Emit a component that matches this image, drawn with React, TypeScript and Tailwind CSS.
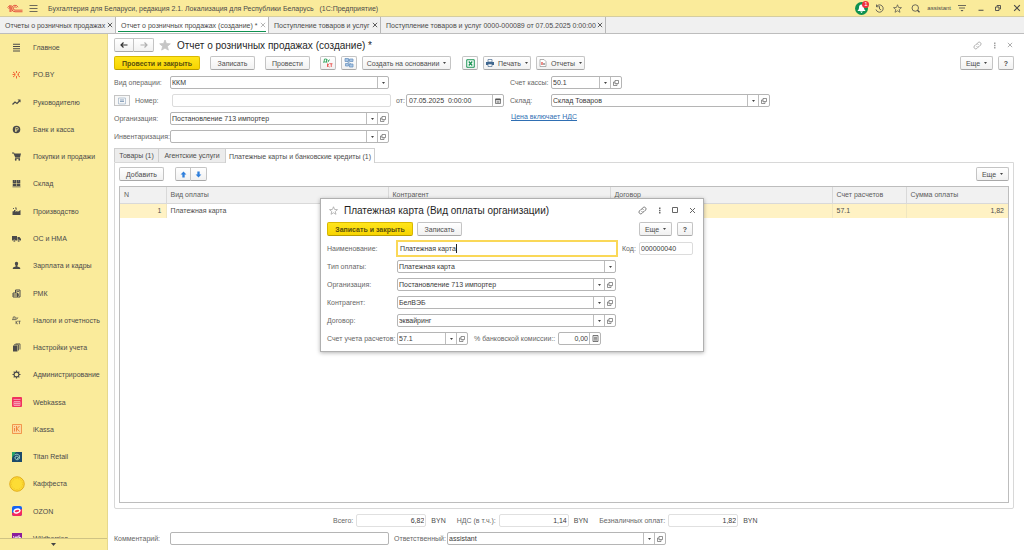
import type { ReactNode } from "react";
import clsx from "clsx";

/* ---------- icons ---------- */

const Svg = ({ children, className = "size-[9px]", box = "0 0 18 18" }: { children: ReactNode; className?: string; box?: string }) => (
  <svg viewBox={box} className={clsx("shrink-0", className)} fill="none" stroke="currentColor" strokeWidth="2" aria-hidden="true">
    {children}
  </svg>
);

const Caret = ({ className = "h-[2px] w-[3px]" }: { className?: string }) => (
  <svg viewBox="0 0 4 2" preserveAspectRatio="none" className={clsx("shrink-0 fill-[#444]", className)} aria-hidden="true">
    <path d="M0 0h4L2 2z" />
  </svg>
);

const OpenIcon = () => (
  <Svg className="size-[6px] text-[#666]" box="0 0 12 12">
    <path d="M4 1h7v6H6L4 8z M4 4H1v7h7V8" strokeWidth="1.4" />
  </Svg>
);

const LinkIcon = () => (
  <Svg>
    <path d="M7 11a3.500 3.500 0 0 0 5 .3l3.400-3.400a3.600 3.600 0 0 0-5-5L8.600 4.600M11 7a3.500 3.500 0 0 0-5-.3l-3.400 3.400a3.600 3.600 0 0 0 5 5l1.800-1.800" strokeWidth="1.700" />
  </Svg>
);

const DotsIcon = () => (
  <Svg className="h-[7px] w-[3px]" box="0 0 6 14">
    <path d="M2 1h3v3H2zM2 5.500h3v3H2zM2 10h3v3H2z" fill="currentColor" stroke="none" />
  </Svg>
);

const CrossIcon = ({ className = "size-[7px]" }: { className?: string }) => (
  <Svg className={className} box="0 0 14 14">
    <path d="M2 2l10 10M12 2L2 12" />
  </Svg>
);

const StarIcon = ({ className, filled }: { className?: string; filled?: boolean }) => (
  <Svg className={className} box="0 0 24 24">
    <path d="M12 2l2.900 7.200 7.700.5-5.900 5 1.900 7.500L12 18l-6.600 4.200 1.900-7.500-5.900-5 7.700-.5z" strokeWidth="1.800" fill={filled ? "currentColor" : "none"} />
  </Svg>
);

const ArrowIcon = ({ back, className }: { back?: boolean; className?: string }) => (
  <Svg className={clsx("h-[6px] w-[8px]", className)} box="0 0 16 12">
    <path d={back ? "M15 6H2M7 1L2 6l5 5" : "M1 6h13M9 1l5 5-5 5"} strokeWidth="2.400" />
  </Svg>
);

const Dk = ({ color }: { color?: boolean }) => (
  <Svg className={color ? "size-[10px]" : "size-[9px]"} box="0 0 20 20">
    <g strokeWidth="1.600">
      <g stroke={color ? "#1d9a4b" : "#4a4a4a"}>
        <path d="M2 8l1-6h4v6M1 9V8h7v1M9 3l2 3M13 3l-3 5" />
      </g>
      <g stroke={color ? "#e8413c" : "#4a4a4a"}>
        <path d="M9 11v7M13 11l-4 3.500 4 3.500M14 11.500h5M16.500 11.500V18" />
      </g>
    </g>
  </Svg>
);

const menuIcons: Record<string, ReactNode> = {
  main: <Svg><path d="M2 2.500h14M2 7h14M2 11.500h14M2 16h14" /></Svg>,
  po: (
    <Svg className="size-[9px] text-[#f0592b]">
      <path d="M9 2v4M9 12v5M2 4l5 4M2 14l5-4M16 4l-5 4M16 14l-5-4M1 9h5M12 9h2" strokeWidth="1.800" />
    </Svg>
  ),
  chart: <Svg><path d="M1 13l5-5 4 3 6-6" strokeWidth="2.600" /><path d="M11 3h6v6z" fill="currentColor" stroke="none" /></Svg>,
  bank: (
    <Svg>
      <circle cx="9" cy="9" r="7.500" fill="currentColor" stroke="none" />
      <path d="M7.500 14V5H10a2.300 2.300 0 0 1 0 5H6M6 12h4" stroke="#faeb9b" strokeWidth="1.500" />
    </Svg>
  ),
  cart: (
    <Svg>
      <path d="M0 1h4l1 2h13l-2 8H6.500L3 3H0z" fill="currentColor" stroke="none" />
      <path d="M6 12.500h10" />
      <circle cx="7.500" cy="15.500" r="1.800" fill="currentColor" stroke="none" />
      <circle cx="14.500" cy="15.500" r="1.800" fill="currentColor" stroke="none" />
    </Svg>
  ),
  stock: (
    <Svg>
      <path d="M1.500 2h7v6h-7zM9.500 2h7v6h-7zM1.500 9h7v5h-7zM9.500 9h7v5h-7zM1 15h16v1.500H1z" fill="currentColor" stroke="none" />
      <path d="M4 4h2M12 4h2" stroke="#faeb9b" strokeWidth="1" />
    </Svg>
  ),
  factory: (
    <Svg>
      <path d="M1 16V9l2-1 1 1V6h3v4l4-3v3l6-4v10z" fill="currentColor" stroke="none" />
      <path d="M2 3h2M6 2h3M7 4h3" strokeWidth="1.800" />
    </Svg>
  ),
  truck: (
    <Svg>
      <path d="M0 4h10v9H0zM11 6h4l3 4v3h-7z" fill="currentColor" stroke="none" />
      <circle cx="4.500" cy="14" r="2.200" fill="currentColor" stroke="#faeb9b" strokeWidth="1" />
      <circle cx="13.500" cy="14" r="2.200" fill="currentColor" stroke="#faeb9b" strokeWidth="1" />
    </Svg>
  ),
  person: (
    <Svg>
      <path d="M9 1.500a3.300 3.300 0 0 1 3.300 3.500c0 2-.8 3.500-1.600 4.400V11l4.300 1.500c1 .4 1.500 1.500 1.500 3.500h-15c0-2 .5-3.100 1.500-3.500L7.300 11V9.400C6.500 8.500 5.700 7 5.700 5A3.300 3.300 0 0 1 9 1.500z" fill="currentColor" stroke="none" />
    </Svg>
  ),
  rmk: (
    <Svg>
      <path d="M7 8V2h9v14H2V8h9v8M2 12h9" />
      <path d="M9 5h5M13 9v5" strokeWidth="1.600" />
    </Svg>
  ),
  tax: <Dk />,
  books: (
    <Svg>
      <path d="M2 5h9v12H2z" fill="currentColor" stroke="none" />
      <path d="M4 3.500h9V15M7 1.800h9V13" strokeWidth="1.700" />
    </Svg>
  ),
  gear: (
    <Svg>
      <circle cx="9" cy="9" r="4.800" strokeWidth="2.200" />
      <path d="M9 1v3M9 14v3M1 9h3M14 9h3M3.400 3.400l2 2M12.600 12.600l2 2M14.600 3.400l-2 2M5.400 12.600l-2 2" strokeWidth="2.400" />
    </Svg>
  ),
  webkassa: (
    <Svg className="size-[10px]" box="0 0 20 20">
      <rect width="20" height="20" rx="2" fill="#f0325e" stroke="none" />
      <path d="M3 5h14M4 9h12v8H4zM4 13h12M8 9v8M12 9v8" stroke="#fbc4d0" strokeWidth="1.300" />
    </Svg>
  ),
  ikassa: (
    <Svg className="size-[10px] text-[#ef7d31]" box="0 0 20 20">
      <path d="M1 1h18v18H1z" strokeWidth="1.500" fill="#fbd9a0" />
      <path d="M5 8v7M5 4.500v1.500M9 4v11M15 4l-5 5.500 5 5.500" strokeWidth="1.800" />
    </Svg>
  ),
  titan: (
    <Svg className="size-[10px]" box="0 0 20 20">
      <path d="M0 0h20v20H0z" fill="#1c4a6b" stroke="none" />
      <path d="M0 0h8L0 12z" fill="#27a567" stroke="none" />
      <path d="M5 6l5-2 5 3v6l-5 3-4-3v-3l4-2 3 2-1 3h-2" stroke="#a9dccb" strokeWidth="1.700" />
    </Svg>
  ),
  kaff: (
    <Svg className="size-[16px]" box="0 0 32 32">
      <circle cx="16" cy="16" r="14.500" fill="#fddc35" stroke="#e2ac1c" />
      <circle cx="16" cy="16" r="11" stroke="#edbb1f" strokeWidth="1.300" strokeDasharray="2 1.500" />
    </Svg>
  ),
  ozon: (
    <Svg className="size-[10px]" box="0 0 20 20">
      <rect width="20" height="20" rx="4" fill="#1463f3" stroke="none" />
      <path d="M0 14l20-8v10a4 4 0 0 1-4 4H4a4 4 0 0 1-4-4z" fill="#f5285f" stroke="none" />
      <ellipse cx="10" cy="10" rx="6" ry="3.600" fill="#f5285f" stroke="#fff" strokeWidth="2.800" transform="rotate(-15 10 10)" />
    </Svg>
  ),
  wb: (
    <Svg className="size-[10px]" box="0 0 20 20">
      <path d="M0 0h20v20H0z" fill="#8a1c9c" stroke="none" />
      <path d="M3 6l2.500 8L8 7l2.500 7L12 6M14 4v10h3.500V9H14" stroke="#fff" strokeWidth="1.700" />
    </Svg>
  ),
};

const menu = [
  ["main", "Главное"],
  ["po", "PO.BY"],
  ["chart", "Руководителю"],
  ["bank", "Банк и касса"],
  ["cart", "Покупки и продажи"],
  ["stock", "Склад"],
  ["factory", "Производство"],
  ["truck", "ОС и НМА"],
  ["person", "Зарплата и кадры"],
  ["rmk", "РМК"],
  ["tax", "Налоги и отчетность"],
  ["books", "Настройки учета"],
  ["gear", "Администрирование"],
  ["webkassa", "Webkassa"],
  ["ikassa", "iKassa"],
  ["titan", "Titan Retail"],
  ["kaff", "Каффеста"],
  ["ozon", "OZON"],
  ["wb", "Wildberries"],
];

/* ---------- controls ---------- */

const Btn = ({ children, className, label }: { children: ReactNode; className?: string; label?: string }) => (
  <button
    type="button"
    aria-label={label}
    className={clsx(
      "flex h-[14px] shrink-0 items-center justify-center gap-1 whitespace-nowrap rounded-[2px] border border-[#c4c4c4] border-b-[#a8a8a8] bg-linear-to-b from-white to-[#f1f1f1] text-[#4d4d4d]",
      className,
    )}
  >
    {children}
  </button>
);

const PrimaryBtn = ({ children }: { children: ReactNode }) => (
  <button
    type="button"
    className="flex h-[14px] w-[86px] shrink-0 items-center justify-center whitespace-nowrap rounded-[2px] border border-[#d9b800] border-b-[#b89c00] bg-linear-to-b from-[#ffe51a] to-[#f7d400] font-bold text-[#5a500c]"
  >
    {children}
  </button>
);

const MoreBtn = () => (
  <Btn className="w-[33px]">
    Еще <Caret />
  </Btn>
);

const SideBtn = ({ children, label }: { children: ReactNode; label: string }) => (
  <button type="button" aria-label={label} className="flex h-full w-[11px] shrink-0 items-center justify-center border-l border-[#bdbdbd]">
    {children}
  </button>
);

const box = "flex h-[13px] items-stretch overflow-hidden rounded-[2px] border border-[#b5b5b5] bg-white text-[#3a3a3a]";

/* select with the small arrow cell, and optionally an "open" button */
const Combo = ({ id, value, open, className }: { id: string; value: string; open?: boolean; className?: string }) => (
  <div className={clsx(box, className)}>
    <div className="relative flex min-w-0 flex-1">
      <select id={id} className="w-full appearance-none bg-transparent pl-px pr-3 outline-none" defaultValue={value}>
        <option>{value}</option>
      </select>
      <span className="pointer-events-none absolute inset-y-0 right-0 flex w-[11px] items-center justify-center border-l border-[#bdbdbd]">
        <Caret />
      </span>
    </div>
    {open && (
      <SideBtn label="Открыть">
        <OpenIcon />
      </SideBtn>
    )}
  </div>
);

const Row = ({ children }: { children: ReactNode }) => <div className="flex h-[13px] items-center">{children}</div>;

const Label = ({ id, children, className }: { id: string; children: ReactNode; className?: string }) => (
  <label htmlFor={id} className={clsx("shrink-0 whitespace-nowrap text-[#666]", className)}>
    {children}
  </label>
);

const Total = ({ id, label, value }: { id: string; label: string; value: string }) => (
  <div className="flex items-center">
    <Label id={id} className="mr-[3px]">{label}</Label>
    <input id={id} readOnly defaultValue={value} className="h-[13px] w-[70px] rounded-[2px] border border-[#e0e0e0] bg-white px-px text-right text-[#3a3a3a]" />
    <span className="ml-[5px] text-[#4d4d4d]">BYN</span>
  </div>
);

/* ---------- page parts ---------- */

const TitleBar = () => (
  <header className="flex h-[17px] shrink-0 items-center border-b border-[#d5cda0] bg-[#faeb9b] text-[#4a4a4a]">
    <svg viewBox="0 0 32 18" className="ml-[7px] h-[9px] w-4 shrink-0" fill="none" stroke="#e0382f" strokeWidth="1.700" aria-hidden="true">
      <path d="M1 7l5-4v13M3 9l3-2M8 2v14M22 6.500A6.500 6.500 0 1 0 16 15.500H31M19 7.600A3.300 3.300 0 1 0 16 12.300H31" />
    </svg>
    <button type="button" aria-label="Меню" className="ml-[6px]">
      <Svg className="block size-[9px]"><path d="M1 3h16M1 9h16M1 15h16" strokeWidth="1.600" /></Svg>
    </button>
    <p className="ml-[10px] whitespace-nowrap">
      Бухгалтерия для Беларуси, редакция 2.1. Локализация для Республики Беларусь &nbsp; (1С:Предприятие)
    </p>
    <div className="ml-auto flex items-center pr-[3px]">
      <button type="button" aria-label="Уведомления" className="relative">
        <Svg className="block size-[13px]" box="0 0 26 26">
          <circle cx="13" cy="13" r="13" fill="#0f9150" stroke="none" />
          <path d="M13 5c-4 0-5 3-5 6.500C8 15 6 16 5 18h16c-1-2-3-3-3-6.500C18 8 17 5 13 5zM10 19h6l-3 3z" fill="#fff" stroke="none" />
        </Svg>
        <span className="absolute -right-px -top-px flex size-[7px] items-center justify-center rounded-full bg-[#f0303c] text-[6px] leading-none text-white">1</span>
      </button>
      <button type="button" aria-label="История" className="ml-[7px]">
        <Svg className="block size-[9px]"><path d="M3 5a7.300 7.300 0 1 1-1 6M3 1v4.500h4.500M9 4.500V10l3.500 2" strokeWidth="1.600" /></Svg>
      </button>
      <button type="button" aria-label="Избранное" className="ml-[9px]">
        <StarIcon className="block size-[9px]" />
      </button>
      <button type="button" aria-label="Поиск" className="ml-[9px]">
        <Svg className="block size-[9px]"><circle cx="8.500" cy="8" r="6.500" strokeWidth="1.600" /><path d="M13 12.500l4 4" strokeWidth="2.500" /></Svg>
      </button>
      <span className="ml-[7px] text-[6px]">assistant</span>
      <button type="button" aria-label="Настройки" className="ml-[7px]">
        <Svg className="block size-[8px]" box="0 0 16 16"><path d="M0 3h16M2 8h12" strokeWidth="1.600" /><path d="M5 12h6l-3 3z" fill="currentColor" stroke="none" /></Svg>
      </button>
      <button type="button" aria-label="Свернуть" className="ml-[12px]">
        <Svg className="block size-[6px]" box="0 0 12 12"><path d="M1 10.500h10" /></Svg>
      </button>
      <button type="button" aria-label="Восстановить" className="ml-[11px]">
        <Svg className="block size-[6px]" box="0 0 12 12"><path d="M1 4h7v7H1zM4 3V1h7v7H9" strokeWidth="1.800" /></Svg>
      </button>
      <button type="button" aria-label="Закрыть программу" className="ml-[12px]">
        <CrossIcon className="block size-[8px]" />
      </button>
    </div>
  </header>
);

const windows = [
  ["Отчеты о розничных продажах", "w-[116px]"],
  ["Отчет о розничных продажах (создание) *", "w-[153px]"],
  ["Поступление товаров и услуг", "w-[112px]"],
  ["Поступление товаров и услуг 0000-000089 от 07.05.2025 0:00:00", "w-[225px]"],
];

const WindowTabs = () => (
  <nav className="flex h-[17px] shrink-0 border-b border-[#bdbdbd] bg-[#f0f0f0] text-[#4a4a4a]">
    {windows.map(([name, width], i) => (
      <div
        key={name}
        className={clsx("relative flex shrink-0 items-center justify-between border-r border-[#b8b8b8] pl-[5px] pr-[2px]", width, i === 1 && "bg-white")}
      >
        <a href="#" className="whitespace-nowrap">{name}</a>
        <button type="button" aria-label="Закрыть вкладку">
          <CrossIcon className={clsx("block size-[6px]", i === 1 ? "text-[#aaa]" : "text-[#444]")} />
        </button>
        {i === 1 && <span className="absolute inset-x-[2px] bottom-px h-px bg-[#0f9150]" />}
      </div>
    ))}
  </nav>
);

const Sidebar = () => (
  <aside className="flex w-[108px] shrink-0 flex-col border-r border-[#e6d88c] bg-[#faeb9b] text-[#4a4a4a]">
    <div className="min-h-0 flex-1 overflow-hidden">
      <ul className="flex h-[518px] flex-col">
        {menu.map(([icon, name]) => (
          <li key={icon} className="flex-1">
            <a href="#" className="flex h-full items-center">
              <span className="flex w-[33px] shrink-0 justify-center">{menuIcons[icon]}</span>
              <span className="whitespace-nowrap">{name}</span>
            </a>
          </li>
        ))}
      </ul>
    </div>
    <button type="button" aria-label="Прокрутить вниз" className="flex h-3 shrink-0 items-center justify-center border-t border-[#cfc384]">
      <Caret className="h-[3px] w-[5px]" />
    </button>
  </aside>
);

const Toolbar = () => (
  <div className="mt-1 flex items-center">
    <PrimaryBtn>Провести и закрыть</PrimaryBtn>
    <Btn className="ml-[10px] w-[45px]">Записать</Btn>
    <Btn className="ml-[10px] w-[45px]">Провести</Btn>
    <Btn className="ml-[10px] w-4" label="Проводки"><Dk color /></Btn>
    <Btn className="ml-[5px] w-4" label="Структура подчиненности">
      <Svg className="size-[10px]" box="0 0 20 20">
        <path d="M2 1h7v6H2zM11 2h7v5h-7zM3 11h6v5H3zM11 12h7v6h-7zM6 7l8 5M8 4h3" stroke="#6b93bf" fill="#a9c6e4" strokeWidth="1.500" />
      </Svg>
    </Btn>
    <Btn className="ml-[5px] w-[89px]">Создать на основании <Caret /></Btn>
    <Btn className="ml-[11px] w-4" label="Excel">
      <Svg className="size-[9px]">
        <path d="M1.500 1.500h15v15h-15z" stroke="#1a9454" fill="#fff" strokeWidth="2" />
        <path d="M5.500 5l7 8M12.500 5l-7 8" stroke="#1a9454" strokeWidth="2.600" />
      </Svg>
    </Btn>
    <Btn className="ml-[5px] w-[48px]">
      <Svg className="size-[8px]" box="0 0 16 16">
        <path d="M4 1h8v5H4z" stroke="#4c6f93" fill="#fff" strokeWidth="1.400" />
        <path d="M0 6h16v6H0z" fill="#3f678f" stroke="none" />
        <path d="M4 10h8v5H4z" stroke="#4c6f93" fill="#fff" strokeWidth="1.400" />
      </Svg>
      Печать <Caret />
    </Btn>
    <Btn className="ml-[5px] w-[49px]">
      <Svg className="size-[8px]" box="0 0 16 16">
        <path d="M2 1h8l4 4v10H2z" stroke="#8a8a8a" fill="#fff" strokeWidth="1.300" />
        <path d="M6 6v6" stroke="#e0403a" strokeWidth="2.400" /><path d="M10 8v4" stroke="#555" />
      </Svg>
      Отчеты <Caret />
    </Btn>
    <div className="ml-auto flex gap-[5px]">
      <MoreBtn />
      <Btn className="w-4 font-bold">?</Btn>
    </div>
  </div>
);

const cols = ["N", "Вид оплаты", "Контрагент", "Договор", "Счет расчетов", "Сумма оплаты"];
const row = ["1", "Платежная карта", "", "", "57.1", "1,82"];

const PaymentsPanel = () => (
  <>
    <div role="tablist" className="mt-[5px] flex h-[14px] shrink-0 text-[#4d4d4d]">
      <button type="button" role="tab" className="w-[45px] border border-b-0 border-[#cfcfcf] bg-[#ececec] whitespace-nowrap">Товары (1)</button>
      <button type="button" role="tab" className="w-[66px] border-t border-[#cfcfcf] bg-[#ececec] whitespace-nowrap">Агентские услуги</button>
      <button type="button" role="tab" aria-selected="true" className="relative z-10 -mb-px w-[150px] border border-b-0 border-[#cfcfcf] bg-white whitespace-nowrap">
        Платежные карты и банковские кредиты (1)
      </button>
    </div>
    <section className="flex min-h-0 flex-1 flex-col rounded-b-[2px] border border-[#d8d8d8] px-1 pb-[5px] pt-1">
      <div className="flex shrink-0 items-center">
        <Btn className="w-[45px]">Добавить</Btn>
        <div className="ml-[11px] flex">
          {["M6 1l5 5H8v5H4V6H1z", "M6 11l5-5H8V1H4v5H1z"].map((d, i) => (
            <Btn key={d} label={i ? "Вниз" : "Вверх"} className={clsx("w-4", i ? "rounded-l-none border-l-0" : "rounded-r-none")}>
              <svg viewBox="0 0 12 12" className="size-[7px] fill-[#2f7fdc]" aria-hidden="true"><path d={d} /></svg>
            </Btn>
          ))}
        </div>
        <div className="ml-auto"><MoreBtn /></div>
      </div>
      <div className="mt-[5px] min-h-0 flex-1 border border-[#bdbdbd]">
        <table className="w-full table-fixed text-left text-[#4d4d4d]">
          <colgroup>
            <col className="w-[46px]" />
            <col />
            <col />
            <col />
            <col className="w-[74px]" />
            <col className="w-[102px]" />
          </colgroup>
          <thead>
            <tr className="h-4 border-b border-[#d9d9d9] bg-[#f1f1f1] text-[#5c5c5c]">
              {cols.map((c, i) => (
                <th key={c} className={clsx("px-1 font-normal", i > 0 && "border-l border-[#d9d9d9]")}>{c}</th>
              ))}
            </tr>
          </thead>
          <tbody>
            <tr className="h-[15px] bg-[#fff2c4]">
              {row.map((c, i) => (
                <td key={cols[i]} className={clsx("px-1", (i === 0 || i === 5) && "text-right", i === 1 && "bg-white", i > 0 && "border-l border-[#f0e6c0]")}>{c}</td>
              ))}
            </tr>
          </tbody>
        </table>
      </div>
    </section>
  </>
);

const Report = () => (
  <main className="flex min-w-0 flex-1 flex-col bg-white pl-[6px] pr-[10px] pt-1">
    <div className="flex h-[14px] shrink-0 items-center">
      <div className="flex">
        <Btn label="Назад" className="w-5 rounded-r-none"><ArrowIcon back className="text-[#333]" /></Btn>
        <Btn label="Вперед" className="w-5 rounded-l-none border-l-0"><ArrowIcon className="text-[#b0b0b0]" /></Btn>
      </div>
      <button type="button" aria-label="В избранное" className="ml-[5px]">
        <StarIcon filled className="block size-3 text-[#c6c6c6]" />
      </button>
      <h1 className="ml-[6px] whitespace-nowrap text-[10px] text-[#1f1f1f]">Отчет о розничных продажах (создание) *</h1>
      <div className="ml-auto flex items-center gap-[11px] pr-px text-[#a0a0a0]">
        <LinkIcon />
        <DotsIcon />
        <CrossIcon className="size-[6px]" />
      </div>
    </div>
    <Toolbar />

    <form className="mt-[6px] flex shrink-0">
      <div className="flex w-[396px] flex-col gap-[5px]">
        <Row>
          <Label id="op" className="w-[56px]">Вид операции:</Label>
          <Combo id="op" value="ККМ" className="w-[219px]" />
        </Row>
        <Row>
          <button type="button" aria-label="Состояние документа" className="flex h-[11px] w-4 items-center justify-center border border-[#c4c4c4] bg-[#f8f8f8]">
            <Svg className="size-[8px]" box="0 0 16 16"><path d="M1 2h14v12H1z" stroke="#9fb2c6" strokeWidth="1.400" /><path d="M4 6h8M4 9h8" stroke="#8ba3bd" /></Svg>
          </button>
          <Label id="num" className="ml-[5px] w-[37px]">Номер:</Label>
          <input id="num" className="h-[13px] w-[219px] rounded-[2px] border border-[#dcdcdc] px-[2px]" />
          <Label id="date" className="ml-[5px] w-[10px]">от:</Label>
          <div className={clsx(box, "w-[98px]")}>
            <input id="date" defaultValue="07.05.2025  0:00:00" className="min-w-0 flex-1 whitespace-pre pl-[2px] outline-none" />
            <SideBtn label="Выбрать дату">
              <Svg className="size-[6px] text-[#555]" box="0 0 12 12"><path d="M1 2h10v9H1z" strokeWidth="1.400" /><path d="M1 1.500h10v3H1z" fill="currentColor" stroke="none" /><path d="M3 7h6M3 9h6" strokeWidth="1" /></Svg>
            </SideBtn>
          </div>
        </Row>
        <Row>
          <Label id="org" className="w-[56px]">Организация:</Label>
          <Combo id="org" open value="Постановление 713 импортер" className="w-[219px]" />
        </Row>
        <Row>
          <Label id="inv" className="w-[56px]">Инвентаризация:</Label>
          <Combo id="inv" open value="" className="w-[219px]" />
        </Row>
      </div>
      <div className="flex flex-col gap-[5px]">
        <Row>
          <Label id="acc" className="w-[41px]">Счет кассы:</Label>
          <Combo id="acc" open value="50.1" className="w-[71px]" />
        </Row>
        <Row>
          <Label id="store" className="w-[41px]">Склад:</Label>
          <Combo id="store" open value="Склад Товаров" className="w-[219px]" />
        </Row>
        <a href="#" className="self-start pl-px text-[#2f6fb3] underline">Цена включает НДС</a>
      </div>
    </form>

    <PaymentsPanel />

    <div className="mt-[5px] flex shrink-0 items-center gap-[11px] pl-[219px]">
      <Total id="total" label="Всего:" value="6,82" />
      <Total id="vat" label="НДС (в т.ч.):" value="1,14" />
      <Total id="cashless" label="Безналичных оплат:" value="1,82" />
    </div>
    <div className="mb-[5px] mt-[5px] flex shrink-0 items-center">
      <Label id="comment" className="w-[56px]">Комментарий:</Label>
      <input id="comment" className={clsx(box, "w-[219px] px-[2px]")} />
      <Label id="resp" className="ml-[5px] w-[53px]">Ответственный:</Label>
      <Combo id="resp" open value="assistant" className="w-[219px]" />
    </div>
  </main>
);

const PaymentDialog = () => (
  <div
    role="dialog"
    aria-labelledby="dialog-title"
    className="absolute left-1/2 top-[198px] w-96 -translate-x-1/2 border border-[#b0b0b0] bg-white px-[6px] pb-[6px] pt-1 shadow-[0_1px_4px_rgba(0,0,0,0.3)]"
  >
    <div className="flex h-[14px] items-center">
      <StarIcon className="ml-[2px] size-[9px] text-[#999]" />
      <h2 id="dialog-title" className="ml-[6px] whitespace-nowrap text-[10px] text-[#1f1f1f]">Платежная карта (Вид оплаты организации)</h2>
      <div className="ml-auto flex items-center gap-[11px] pr-px text-[#666]">
        <LinkIcon />
        <DotsIcon />
        <Svg className="size-[6px]" box="0 0 12 12"><path d="M1 1h10v10H1z" /></Svg>
        <CrossIcon />
      </div>
    </div>
    <div className="mt-[5px] flex pr-1">
      <PrimaryBtn>Записать и закрыть</PrimaryBtn>
      <Btn className="ml-1 w-[45px]">Записать</Btn>
      <div className="ml-auto flex gap-[5px]">
        <MoreBtn />
        <Btn className="w-4 font-bold">?</Btn>
      </div>
    </div>
    <form className="mt-[6px] flex flex-col gap-[5px]">
      <Row>
        <Label id="name" className="w-[69px]">Наименование:</Label>
        <div className="flex h-[17px] w-[222px] shrink-0 items-center border-2 border-[#fad858] bg-white pl-[2px] text-[#3a3a3a]">
          <input id="name" defaultValue="Платежная карта" className="[field-sizing:content] caret-transparent outline-none" />
          <span className="h-[9px] w-px bg-[#222]" />
        </div>
        <Label id="code" className="ml-1 w-[17px]">Код:</Label>
        <input id="code" readOnly defaultValue="000000040" className="h-[13px] w-[54px] rounded-[2px] border border-[#dcdcdc] px-px text-[#3a3a3a]" />
      </Row>
      <Row>
        <Label id="type" className="w-[70px]">Тип оплаты:</Label>
        <Combo id="type" value="Платежная карта" className="w-[219px]" />
      </Row>
      <Row>
        <Label id="d-org" className="w-[70px]">Организация:</Label>
        <Combo id="d-org" open value="Постановление 713 импортер" className="w-[219px]" />
      </Row>
      <Row>
        <Label id="partner" className="w-[70px]">Контрагент:</Label>
        <Combo id="partner" open value="БелВЭБ" className="w-[219px]" />
      </Row>
      <Row>
        <Label id="contract" className="w-[70px]">Договор:</Label>
        <Combo id="contract" open value="эквайринг" className="w-[219px]" />
      </Row>
      <Row>
        <Label id="d-acc" className="w-[70px]">Счет учета расчетов:</Label>
        <Combo id="d-acc" open value="57.1" className="w-[71px]" />
        <Label id="fee" className="ml-[6px] w-[84px]">% банковской комиссии::</Label>
        <div className={clsx(box, "w-[43px]")}>
          <input id="fee" defaultValue="0,00" className="min-w-0 flex-1 pr-px text-right outline-none" />
          <SideBtn label="Калькулятор">
            <Svg className="size-[7px] text-[#555]" box="0 0 14 14"><path d="M2 1h10v12H2zM4 4.500h6M4 7.500h6M4 10h6" strokeWidth="1.600" /></Svg>
          </SideBtn>
        </div>
      </Row>
    </form>
  </div>
);

export default function App() {
  return (
    <div className="relative flex h-screen flex-col overflow-hidden bg-white font-['Liberation_Sans',Arial,sans-serif] text-[7px] leading-[9px]">
      <TitleBar />
      <WindowTabs />
      <div className="flex min-h-0 flex-1">
        <Sidebar />
        <Report />
      </div>
      <PaymentDialog />
    </div>
  );
}
